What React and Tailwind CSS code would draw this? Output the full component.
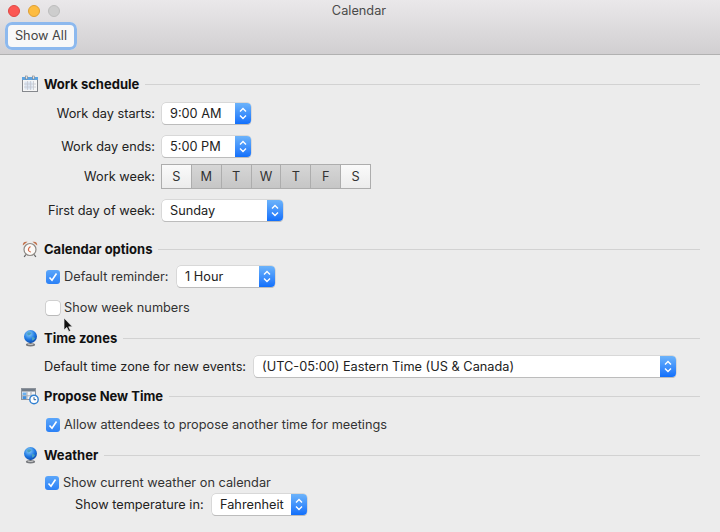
// App.jsx
import React from 'react';

const font = { fontFamily: 'Inter, Roboto, sans-serif' };

function CalendarIcon() {
  return (
    <svg width="18" height="18" viewBox="0 0 18 18" className="-ml-px shrink-0">
      <rect x="1.5" y="2.5" width="15" height="14" fill="#f6f6f6" stroke="#85888d" />
      <rect x="1" y="2" width="16" height="3" fill="#5fa4e0" />
      <rect x="4.5" y="1" width="2" height="3" fill="#e8e8e8" stroke="#6c7078" strokeWidth="0.5" />
      <rect x="11.5" y="1" width="2" height="3" fill="#e8e8e8" stroke="#6c7078" strokeWidth="0.5" />
      <rect x="3.5" y="6.5" width="8" height="8" fill="#dbe5f2" />
      <path d="M3 9h12M3 12h12M6.5 6v9M9.5 6v9M12.5 6v9" stroke="#c4c8d0" strokeWidth="0.8" fill="none" />
    </svg>
  );
}

function AlarmIcon() {
  return (
    <svg width="18" height="18" viewBox="0 0 18 18" className="-ml-px shrink-0">
      <path d="M1.8 5.5 Q1.5 1 6.5 1.8 Z" fill="#c0704a" />
      <path d="M16.2 5.5 Q16.5 1 11.5 1.8 Z" fill="#c0704a" />
      <path d="M4.8 14.5l-1.6 2.5M13.2 14.5l1.6 2.5" stroke="#666" strokeWidth="1.3" />
      <circle cx="9" cy="9.5" r="6" fill="#fbf9f6" stroke="#8d8985" strokeWidth="1.2" />
      <path d="M9.5 6.5Q7 8 7.5 10.5Q8.5 12 10 12" stroke="#d4694a" strokeWidth="1.1" fill="none" />
    </svg>
  );
}

function GlobeIcon() {
  return (
    <svg width="18" height="18" viewBox="0 0 18 18" className="-ml-px shrink-0">
      <defs>
        <radialGradient id="globe" cx="0.4" cy="0.3" r="0.8">
          <stop offset="0" stopColor="#8fd0fb" />
          <stop offset="0.55" stopColor="#1d78e2" />
          <stop offset="1" stopColor="#0a3f9e" />
        </radialGradient>
      </defs>
      <ellipse cx="9.5" cy="15.8" rx="4.6" ry="1.7" fill="#77797d" />
      <ellipse cx="9.5" cy="15.3" rx="3" ry="0.8" fill="#c5c6c8" />
      <rect x="8.5" y="12.5" width="2" height="2.5" fill="#70747a" />
      <circle cx="9.5" cy="7.5" r="6.5" fill="url(#globe)" />
      <path d="M6.5 3.5 Q9.5 2.5 10.5 4.5 Q9 6.5 7 6.5 Q5.5 5 6.5 3.5Z M11 8 Q13.5 7.5 14 9.5 Q12.5 12 11 11.5Z" fill="#4aa0c0" />
    </svg>
  );
}

function ProposeIcon() {
  return (
    <svg width="18" height="18" viewBox="0 0 18 18" className="-ml-px shrink-0">
      <rect x="0.5" y="1.5" width="14" height="11" fill="#f4f4f6" stroke="#8d939b" />
      <rect x="1" y="2" width="13" height="2.5" fill="#727c88" />
      <rect x="1.5" y="5.5" width="4" height="3" fill="#6cb0ee" />
      <rect x="1.5" y="9" width="4" height="3" fill="#3f8fe0" />
      <path d="M6 5v7.5M10 5v7.5M1 8.8h13" stroke="#a9aeb6" fill="none" />
      <circle cx="13" cy="12.5" r="4.2" fill="#fff" stroke="#2f7fd0" strokeWidth="1.4" />
      <path d="M13 10.2v2.5h2.1" stroke="#2b5f96" fill="none" />
    </svg>
  );
}

function Heading({ icon, title, className = '' }) {
  return (
    <div className={`flex h-5 items-center ${className}`}>
      <div className="w-[22px]">{icon}</div>
      <span className="mt-px text-[13px] font-bold text-[#111] whitespace-nowrap">{title}</span>
      <div className="ml-[6px] h-px flex-1 bg-[#d2d2d2]" />
    </div>
  );
}

// popup button with the blue stepper on the right
function Select({ value, className = '' }) {
  return (
    <div className={`flex h-[21px] overflow-hidden rounded-[4px] bg-white shadow-[0_0_0_0.5px_#c4c4c4,0_1px_0_0_#b4b4b4] ${className}`}>
      <span className="flex-1 pl-2 text-[12.75px] leading-[21px] text-[#222] whitespace-nowrap">{value}</span>
      <div className="flex w-4 items-center justify-center bg-gradient-to-b from-[#6cb3fa] to-[#106ffb]">
        <svg width="8" height="13" viewBox="0 0 8 13" fill="none" stroke="#fff" strokeWidth="1.4">
          <path d="M1 4.5L4 1.5L7 4.5M1 8.5L4 11.5L7 8.5" />
        </svg>
      </div>
    </div>
  );
}

function Checkbox({ checked }) {
  if (checked) {
    return (
      <div className="flex h-[14px] w-[14px] shrink-0 items-center justify-center rounded-[3px] bg-gradient-to-b from-[#5ba6fa] to-[#2a80f6]">
        <svg width="10" height="10" viewBox="0 0 10 10" fill="none" stroke="#fff" strokeWidth="1.6">
          <path d="M1.5 5.5L4 8.3L8.5 1.5" />
        </svg>
      </div>
    );
  }
  return <div className="h-[14px] w-[14px] shrink-0 rounded-[3px] bg-white shadow-[0_0_0_0.5px_#b4b4b4,0_1px_0_0_#c0c0c0]" />;
}

function LabelRow({ label, children, className = '' }) {
  return (
    <div className={`flex items-center ${className}`}>
      <span className="w-[133px] text-right text-[12.75px] text-[#222] whitespace-nowrap">{label}</span>
      <div className="ml-[6px] pl-px">{children}</div>
    </div>
  );
}

const days = [
  { d: 'S', on: false },
  { d: 'M', on: true },
  { d: 'T', on: true },
  { d: 'W', on: true },
  { d: 'T', on: true },
  { d: 'F', on: true },
  { d: 'S', on: false },
];

export default function App() {
  return (
    <div className="relative h-[532px] w-[720px] overflow-hidden bg-[#ececec]" style={font}>
      <div className="h-[55px] border-b border-[#b1b1b1] bg-gradient-to-b from-[#eae8ea] to-[#d1cfd1]">
        <div className="relative flex h-[22px] items-center gap-2 pl-2">
          <div className="h-3 w-3 rounded-full bg-[#fc5753] border border-[#df4744]" />
          <div className="h-3 w-3 rounded-full bg-[#fdbc40] border border-[#de9f34]" />
          <div className="h-3 w-3 rounded-full bg-[#cdcdcd] border border-[#bdbdbd]" />
          <span className="absolute inset-x-0 pr-[2px] text-center text-[12.75px] text-[#4a4a4a]">Calendar</span>
        </div>
        <div className="ml-[5px] flex h-7 w-[72px] items-center justify-center rounded-[7px] bg-[#f8f8f8] text-[12.75px] text-[#444] shadow-[inset_0_0_0_3px_#8db9ee]">
          Show All
        </div>
      </div>

      <div className="pl-[22px] pr-5">
        <Heading icon={<CalendarIcon />} title="Work schedule" className="mt-[19px]" />
        <LabelRow label="Work day starts:" className="mt-[9px]">
          <Select value="9:00 AM" className="w-[89px]" />
        </LabelRow>
        <LabelRow label="Work day ends:" className="mt-3">
          <Select value="5:00 PM" className="w-[89px]" />
        </LabelRow>
        <LabelRow label="Work week:" className="mt-[7px]">
          <div className="-ml-px flex h-[25px] w-[210px] gap-px border border-[#adadad] bg-[#adadad]">
            {days.map((x, i) => (
              <div
                key={i}
                className={`flex flex-1 items-center justify-center text-[12.75px] text-[#333] ${x.on ? 'bg-gradient-to-b from-[#d6d6d6] to-[#c6c6c6]' : 'bg-gradient-to-b from-[#fafafa] to-[#ececec]'}`}
              >
                {x.d}
              </div>
            ))}
          </div>
        </LabelRow>
        <LabelRow label="First day of week:" className="mt-[11px]">
          <Select value="Sunday" className="w-[121px]" />
        </LabelRow>

        <Heading icon={<AlarmIcon />} title="Calendar options" className="mt-[18px]" />
        <div className="ml-6 mt-[7px] flex h-[21px] items-center">
          <Checkbox checked />
          <span className="ml-1 w-[113px] text-[12.75px] text-[#333] whitespace-nowrap">Default reminder:</span>
          <Select value="1 Hour" className="w-[98px]" />
        </div>
        <div className="ml-6 mt-[10px] flex h-[21px] items-center">
          <Checkbox />
          <span className="ml-1 text-[12.75px] text-[#333]">Show week numbers</span>
        </div>

        <Heading icon={<GlobeIcon />} title="Time zones" className="mt-[10px]" />
        <div className="ml-[22px] mt-2 flex h-[21px] items-center">
          <span className="w-[210px] text-[12.75px] text-[#222] whitespace-nowrap">Default time zone for new events:</span>
          <Select value="(UTC-05:00) Eastern Time (US & Canada)" className="w-[422px]" />
        </div>

        <Heading icon={<ProposeIcon />} title="Propose New Time" className="mt-[9px]" />
        <div className="ml-6 mt-2 flex h-[21px] items-center">
          <Checkbox checked />
          <span className="ml-1 text-[12.75px] text-[#333]">Allow attendees to propose another time for meetings</span>
        </div>

        <Heading icon={<GlobeIcon />} title="Weather" className="mt-[10px]" />
        <div className="ml-[23px] mt-[7px] flex h-[21px] items-center">
          <Checkbox checked />
          <span className="ml-1 text-[12.75px] text-[#333]">Show current weather on calendar</span>
        </div>
        <div className="ml-[53px] mt-px flex h-[21px] items-center">
          <span className="w-[137px] text-[12.75px] text-[#222] whitespace-nowrap">Show temperature in:</span>
          <Select value="Fahrenheit" className="w-[95px]" />
        </div>
      </div>

      {/* mouse pointer over the page */}
      <svg width="12" height="16" viewBox="0 0 12 16" className="absolute left-[63px] top-[317px]">
        <path d="M1 1V13L3.8 10.4L5.8 14.6L7.6 13.8L5.7 9.8H9.4Z" fill="#111" stroke="#eee" strokeWidth="0.7" />
      </svg>
    </div>
  );
}
